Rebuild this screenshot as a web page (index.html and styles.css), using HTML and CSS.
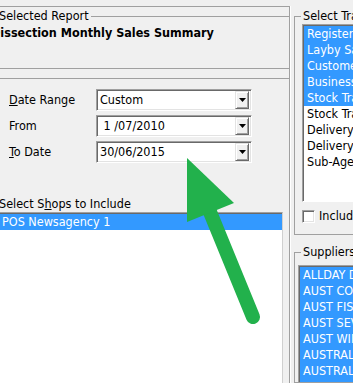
FILE: index.html
```html
<!DOCTYPE html>
<html>

<head>
    <meta name="viewport" content="width=device-width, initial-scale=1.0" />
    <link rel="stylesheet" href="styles.css">
</head>

<body>
    <div class="stage">
        <div class="window">

            <!-- Left side: report + options -->
            <div class="left">
                <fieldset class="group report">
                    <legend>Selected Report</legend>
                    <div class="report-name">Dissection Monthly Sales Summary</div>
                </fieldset>

                <div class="panel">
                    <div class="fields">
                        <label><u>D</u>ate Range</label>
                        <div class="combo">
                            <span class="value">Custom</span>
                            <span class="drop"><svg width="7" height="4" viewBox="0 0 7 4"><polygon points="0,0 7,0 3.5,4" fill="#000" /></svg></span>
                        </div>

                        <label>From</label>
                        <div class="combo">
                            <span class="value">&nbsp;1 /07/2010</span>
                            <span class="drop"><svg width="7" height="4" viewBox="0 0 7 4"><polygon points="0,0 7,0 3.5,4" fill="#000" /></svg></span>
                        </div>

                        <label><u>T</u>o Date</label>
                        <div class="combo">
                            <span class="value">30/06/2015</span>
                            <span class="drop"><svg width="7" height="4" viewBox="0 0 7 4"><polygon points="0,0 7,0 3.5,4" fill="#000" /></svg></span>
                        </div>
                    </div>

                    <div class="shops-label">Select S<u>h</u>ops to Include</div>
                    <div class="listbox shops">
                        <div class="item selected">POS Newsagency 1</div>
                    </div>
                </div>
            </div>

            <!-- Right side: transaction types + suppliers -->
            <div class="right">
                <fieldset class="group trans">
                    <legend>Select Transaction Types</legend>
                    <div class="listbox trans-list">
                        <div class="item selected">Registered Sales</div>
                        <div class="item selected">Layby Sales</div>
                        <div class="item selected">Customer Orders</div>
                        <div class="item selected">Business Sales</div>
                        <div class="item selected">Stock Transfers In</div>
                        <div class="item">Stock Transfers Out</div>
                        <div class="item">Delivery Returns</div>
                        <div class="item">Delivery Sales</div>
                        <div class="item">Sub-Agent Sales</div>
                    </div>
                    <div class="check-row">
                        <span class="checkbox"></span>
                        <span>Include Zero Sales</span>
                    </div>
                </fieldset>

                <fieldset class="group suppliers">
                    <legend>Suppliers</legend>
                    <div class="listbox supplier-list">
                        <div class="item selected">ALLDAY DISTRIBUTORS</div>
                        <div class="item selected">AUST CONSOLIDATED</div>
                        <div class="item selected">AUST FISHING</div>
                        <div class="item selected">AUST SEVEN</div>
                        <div class="item selected">AUST WINES</div>
                        <div class="item selected">AUSTRALIAN MAGAZINES</div>
                        <div class="item selected">AUSTRALIAN PUBLISHING</div>
                        <div class="item selected">AUSTRALIAN TOBACCO</div>
                    </div>
                </fieldset>
            </div>
        </div>

        <!-- Annotation arrow drawn over the form -->
        <svg class="arrow" width="353" height="383" viewBox="0 0 353 383">
            <line x1="210" y1="212" x2="253" y2="317" stroke="#22b14c" stroke-width="14" stroke-linecap="round" />
            <polygon points="187,158 187,222 234,203" fill="#22b14c" />
        </svg>
    </div>
</body>

</html>
```

FILE: styles.css
```css
* {
    box-sizing: border-box;
}

body {
    margin: 0;
    background: #f0f0f0;
    font-family: "DejaVu Sans Condensed", "DejaVu Sans", sans-serif;
    font-stretch: condensed;
    font-size: 12.5px;
    line-height: 16px;
    color: #000;
    overflow: hidden;
}

.stage {
    position: relative;
    width: 353px;
    height: 383px;
    overflow: hidden;
}

.window {
    display: flex;
    gap: 4px;
    margin-left: -16px;
    padding-top: 6px;
    height: 383px;
}

/* group boxes */
.group {
    margin: 0;
    border: 1px solid #a0a0a0;
    min-width: 0;
    flex: none;
}

.group legend {
    padding: 0 2px;
    line-height: 16px;
}

/* left column */
.left {
    width: 306px;
    flex: none;
    display: flex;
    flex-direction: column;
    border-top: 1px solid #a0a0a0;
    border-right: 1px solid #a0a0a0;
    box-shadow: 1px 0 0 #fff;
}

.report {
    margin: 1px 0 0 2px;
    padding: 1px 0 0 4px;
    height: 61px;
    border-right: none;
}

.report legend {
    margin-left: 6px;
}

.report-name {
    font-weight: bold;
    white-space: nowrap;
}

.panel {
    flex: 1 1 auto;
    min-height: 0;
    overflow: hidden;
    margin: 9px 0 0 2px;
    padding: 10px 0 0 12px;
    border-top: 1px solid #a0a0a0;
    border-left: 1px solid #a0a0a0;
}

.fields {
    display: grid;
    grid-template-columns: 87px 156px;
    grid-auto-rows: 22px;
    row-gap: 4px;
    margin-left: 10px;
    align-items: center;
}

.combo {
    display: flex;
    align-items: center;
    height: 22px;
    background: #fff;
    border: 1px solid;
    border-color: #a0a0a0 #fff #fff #a0a0a0;
    box-shadow: inset 1px 1px 0 #696969, inset -1px -1px 0 #e3e3e3;
    padding: 1px 2px 1px 2px;
}

.combo .value {
    flex: 1;
    padding-left: 1px;
    white-space: nowrap;
}

.combo .drop {
    width: 14px;
    height: 18px;
    display: flex;
    align-items: center;
    justify-content: center;
    background: #f0f0f0;
    border: 1px solid;
    border-color: #e3e3e3 #696969 #696969 #e3e3e3;
    box-shadow: inset 1px 1px 0 #fff, inset -1px -1px 0 #a0a0a0;
}

.shops-label {
    margin-top: 33px;
    white-space: nowrap;
}

/* list boxes */
.listbox {
    background: #fff;
    border: 1px solid;
    border-color: #a0a0a0 #fff #fff #a0a0a0;
    box-shadow: inset 1px 1px 0 #696969;
    padding-top: 1px;
    padding-left: 1px;
    overflow: hidden;
}

.item {
    height: 16px;
    padding-left: 3px;
    white-space: nowrap;
}

.item.selected {
    background: #3399ff;
    color: #fff;
}

.shops {
    width: 296px;
    margin-left: -12px;
    height: 200px;
    border-color: #a0a0a0 #d0d0d0 #fff #a0a0a0;
}

.shops .item {
    padding-left: 13px;
}

/* right column */
.right {
    width: 160px;
    flex: none;
    display: flex;
    flex-direction: column;
}

.trans {
    margin-top: 2px;
    padding: 0 0 10px 7px;
}

.trans legend {
    margin-left: -1px;
}

.trans-list {
    height: 178px;
}

.check-row {
    display: flex;
    align-items: center;
    gap: 4px;
    margin-top: 6px;
    white-space: nowrap;
}

.checkbox {
    width: 13px;
    height: 13px;
    flex: none;
    background: #fff;
    border: 1px solid;
    border-color: #a0a0a0 #fff #fff #a0a0a0;
    box-shadow: inset 1px 1px 0 #696969, inset -1px -1px 0 #e3e3e3;
}

.suppliers {
    margin-top: 9px;
    padding: 5px 0 0 3px;
    flex: 1 1 auto;
    min-height: 0;
    overflow: hidden;
}

.suppliers legend {
    margin-left: 3px;
}

.supplier-list {
    height: 200px;
}

.arrow {
    position: absolute;
    top: 0;
    left: 0;
    pointer-events: none;
}
```
